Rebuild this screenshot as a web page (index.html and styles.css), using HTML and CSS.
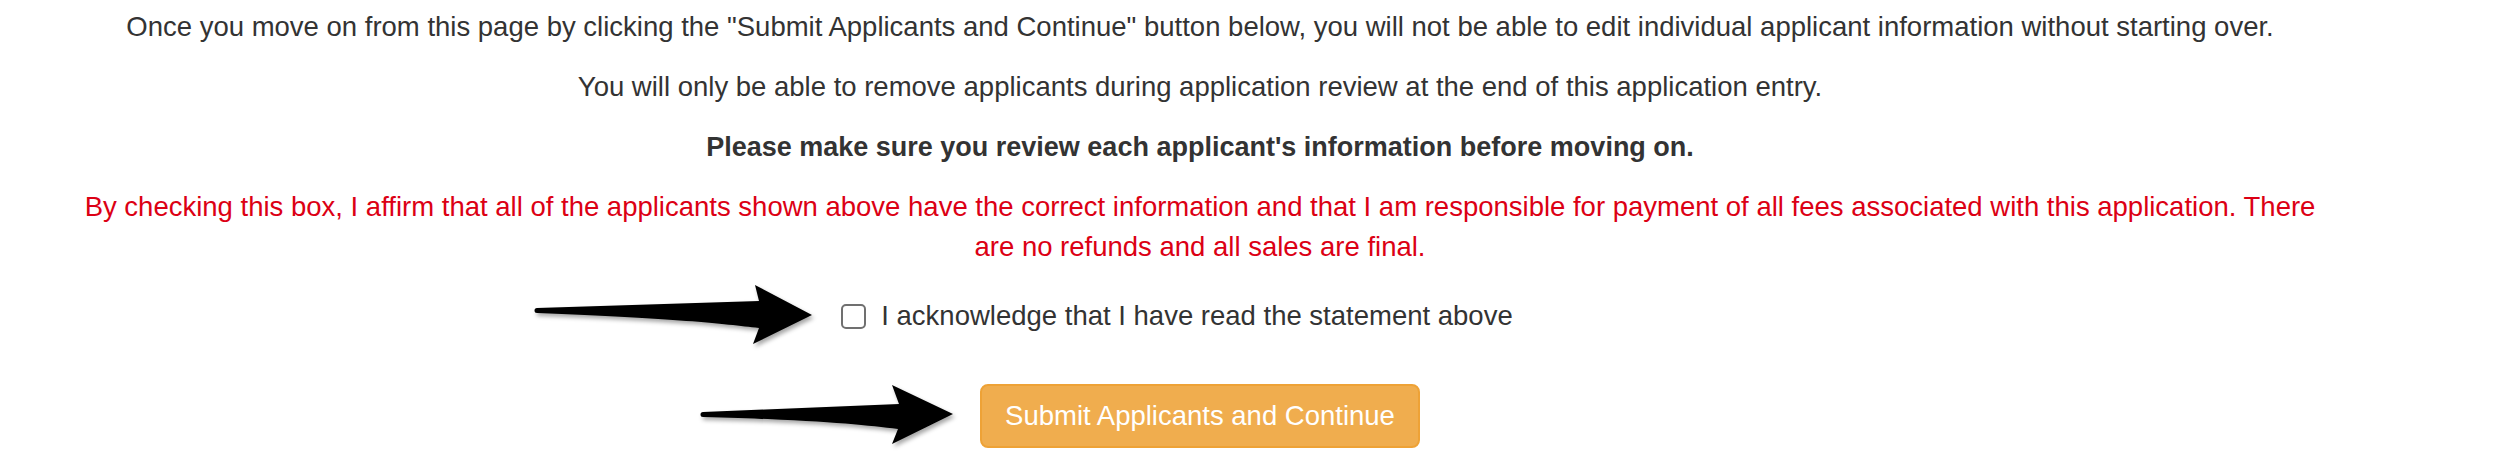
FILE: index.html
```html
<!DOCTYPE html>
<html>
<head>
<meta charset="utf-8">
<title>Submit Applicants</title>
<link rel="stylesheet" href="styles.css">
</head>
<body>
<div class="page">
  <div class="content">
    <p>Once you move on from this page by clicking the "Submit Applicants and Continue" button below, you will not be able to edit individual applicant information without starting over.</p>
    <p>You will only be able to remove applicants during application review at the end of this application entry.</p>
    <p class="strong">Please make sure you review each applicant's information before moving on.</p>
    <p class="warning">By checking this box, I affirm that all of the applicants shown above have the correct information and that I am responsible for payment of all fees associated with this application. There are no refunds and all sales are final.</p>
    <div class="check-row">
      <label class="check-label"><span class="box"></span><span>I acknowledge that I have read the statement above</span></label>
    </div>
    <div class="btn-row">
      <button class="btn-warning" type="button">Submit Applicants and Continue</button>
    </div>
  </div>

  <svg class="arrow arrow-one" width="280" height="60" viewBox="0 0 280 60">
    <path d="M3,23 L225,16 L221,0 L278,30 L219,59 L225,43 C190,39 140,33 3,28 A2.5,2.5 0 0 1 3,23 Z" fill="#000"/>
  </svg>
  <svg class="arrow arrow-two" width="256" height="62" viewBox="0 0 256 62">
    <path d="M3,28 L199,20 L192,1 L253,30 L192,60 L198,45 C165,41 120,36 3,33 A2.5,2.5 0 0 1 3,28 Z" fill="#000"/>
  </svg>
</div>
</body>
</html>
```

FILE: styles.css
```css
html, body {
  margin: 0;
  padding: 0;
  background: #fff;
}

.page {
  position: relative;
  width: 2500px;
  height: 468px;
  overflow: hidden;
  font-family: "Liberation Sans", Helvetica, Arial, sans-serif;
  font-size: 27.5px;
  line-height: 40px;
  color: #333;
}

.content {
  width: 2240px;
  margin-left: 80px;
  padding-top: 7px;
  text-align: center;
}

.content p {
  margin: 0 0 20px;
}

.strong {
  font-weight: bold;
  font-size: 27px;
}

.warning {
  color: #dc0014;
}

.check-row {
  padding-top: 9px;
  height: 40px;
}

.check-label {
  display: inline-flex;
  align-items: center;
  gap: 15px;
  padding-right: 46px;
  color: #333;
}

.box {
  flex: none;
  width: 21px;
  height: 21px;
  border: 2px solid #707070;
  border-radius: 5px;
  background: #fff;
}

.btn-row {
  padding-top: 48px;
}

.btn-warning {
  font-family: "Liberation Sans", Helvetica, Arial, sans-serif;
  font-size: 27.5px;
  line-height: 40px;
  height: 64px;
  width: 440px;
  padding: 0;
  white-space: nowrap;
  color: #fff;
  background: #f0ad4e;
  border: 2px solid #eea236;
  border-radius: 8px;
}

.arrow {
  position: absolute;
  filter: drop-shadow(2px 3px 2px rgba(0, 0, 0, 0.35));
}

.arrow-one {
  left: 534px;
  top: 285px;
}

.arrow-two {
  left: 700px;
  top: 384px;
}
```
